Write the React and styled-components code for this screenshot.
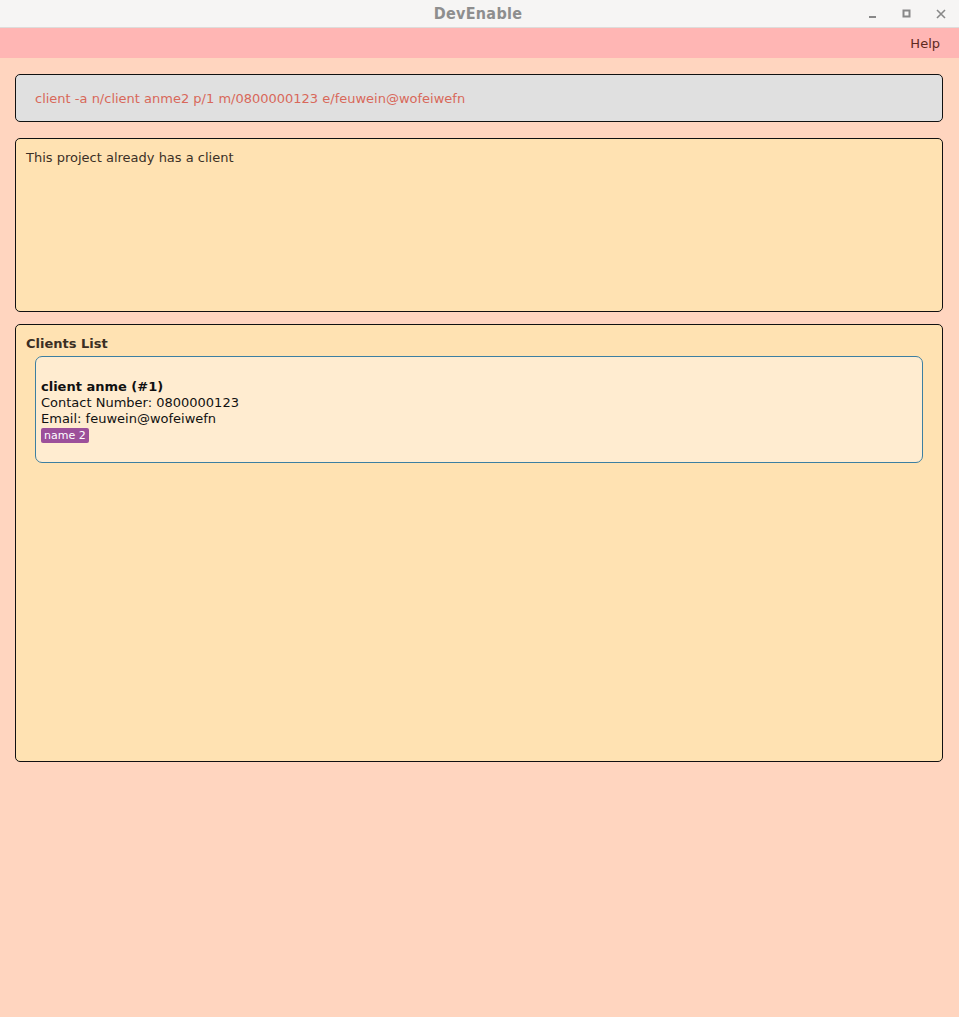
import React from "react";
import styled, { createGlobalStyle } from "styled-components";

const GlobalStyle = createGlobalStyle`
  html, body {
    margin: 0;
    padding: 0;
    height: 100%;
  }
  body {
    font-family: "DejaVu Sans", "Liberation Sans", sans-serif;
    background: #ffd5bf;
  }
  #root {
    min-height: 100%;
  }
`;

const Window = styled.div`
  width: 959px;
  height: 1017px;
  display: flex;
  flex-direction: column;
  background: #ffd5bf;
  overflow: hidden;
`;

const TitleBar = styled.div`
  height: 27px;
  flex: none;
  background: #f6f5f4;
  border-bottom: 1px solid #dedcda;
  display: flex;
  align-items: center;
  justify-content: center;
  position: relative;
`;

const Title = styled.div`
  font-family: "DejaVu Sans Condensed", "DejaVu Sans", sans-serif;
  font-weight: bold;
  font-size: 16px;
  color: #8e8e8e;
  letter-spacing: 0.3px;
  margin-left: -3px;
`;

const WindowButtons = styled.div`
  position: absolute;
  right: 13px;
  top: 0;
  height: 27px;
  display: flex;
  align-items: center;
  gap: 24px;
`;

const MenuBar = styled.div`
  height: 30px;
  flex: none;
  background: #ffb6b4;
  display: flex;
  align-items: center;
  justify-content: flex-end;
  padding-right: 19px;
`;

const MenuItem = styled.span`
  font-size: 13px;
  color: #5e2a20;
`;

const Content = styled.div`
  flex: 1;
  display: flex;
  flex-direction: column;
  padding: 16px 16px 0 15px;
`;

const CommandBox = styled.div`
  height: 48px;
  box-sizing: border-box;
  background: #e0e0e0;
  border: 1px solid #111;
  border-radius: 5px;
  display: flex;
  align-items: center;
  padding-left: 19px;
  font-size: 13px;
  color: #d8685a;
  margin-bottom: 16px;
`;

const Panel = styled.div`
  box-sizing: border-box;
  height: ${({ h }) => h}px;
  background: #ffe2b2;
  border: 1px solid #111;
  border-radius: 5px;
  padding: 11px 10px;
  margin-bottom: ${({ mb }) => mb || 0}px;
  font-size: 13px;
  color: #3b3026;
`;

const ListTitle = styled.div`
  font-weight: bold;
  font-size: 13px;
  color: #3b2e24;
  margin-bottom: 5px;
`;

const Card = styled.div`
  margin-left: 9px;
  margin-right: 9px;
  height: 107px;
  box-sizing: border-box;
  background: #ffecd0;
  border: 1px solid #3d7fa1;
  border-radius: 7px;
  padding: 22px 5px 0;
  color: #111;
  font-size: 13px;
  line-height: 16px;
`;

const Name = styled.div`
  font-weight: bold;
`;

const Tag = styled.span`
  display: inline-block;
  background: #9c509a;
  color: #fff;
  font-size: 11px;
  line-height: 15px;
  padding: 0 3px;
  border-radius: 2px;
`;

export default function App() {
  return (
    <Window>
      <GlobalStyle />
      <TitleBar>
        <Title>DevEnable</Title>
        <WindowButtons>
          <svg width="10" height="10" viewBox="0 0 10 10">
            <rect x="1" y="7" width="7" height="2" fill="#888" />
          </svg>
          <svg width="10" height="10" viewBox="0 0 10 10">
            <rect x="1.5" y="1.5" width="6" height="6" fill="none" stroke="#888" strokeWidth="2" />
          </svg>
          <svg width="10" height="10" viewBox="0 0 10 10">
            <path d="M1 1 L9 9 M9 1 L1 9" stroke="#888" strokeWidth="1.6" />
          </svg>
        </WindowButtons>
      </TitleBar>
      <MenuBar>
        <MenuItem>Help</MenuItem>
      </MenuBar>
      <Content>
        <CommandBox>client -a n/client anme2 p/1 m/0800000123 e/feuwein@wofeiwefn</CommandBox>
        <Panel h={174} mb={12}>This project already has a client</Panel>
        <Panel h={438}>
          <ListTitle>Clients List</ListTitle>
          <Card>
            <Name>client anme (#1)</Name>
            <div>Contact Number: 0800000123</div>
            <div>Email: feuwein@wofeiwefn</div>
            <Tag>name 2</Tag>
          </Card>
        </Panel>
      </Content>
    </Window>
  );
}
